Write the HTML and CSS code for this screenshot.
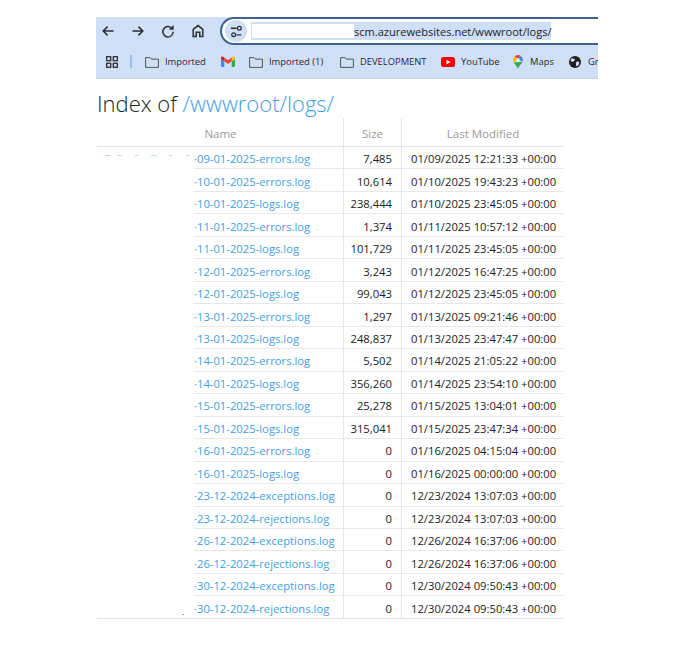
FILE: index.html
```html
<!DOCTYPE html>
<html lang="en">
<head>
<meta charset="utf-8">
<title>Index of /wwwroot/logs/</title>
<link rel="stylesheet" href="styles.css">
</head>
<body>
<div class="frame">
  <header class="chrome">
    <div class="nav-row">
      <svg class="nav-icon" viewBox="-3 -3 30 30"><path d="M19 12H6M11.500 6.500 6 12l5.500 5.500"/></svg>
      <svg class="nav-icon" viewBox="-3 -3 30 30"><path d="M5 12h13M12.500 6.500 18 12l-5.500 5.500"/></svg>
      <svg class="nav-icon" viewBox="-3 -3 30 30"><path d="M17.300 9.200A6.500 6.500 0 1 0 18.500 13"/><path class="solid" d="M19 4.500v6h-6z"/></svg>
      <svg class="nav-icon" viewBox="-3 -3 30 30"><path d="M6 19V10l6-4.800 6 4.800v9h-3.800v-5.500h-4.400V19z"/></svg>
      <div class="omnibox">
        <span class="tune"><svg viewBox="0 0 16 16"><path d="M2 4.500h6M13 11.500H8"/><circle cx="11" cy="4.500" r="2"/><circle cx="5" cy="11.500" r="2"/></svg></span>
        <span class="url"><span class="url-mask"></span><span class="url-text">scm.azurewebsites.net/wwwroot/logs/</span></span>
      </div>
    </div>
    <div class="bookmarks">
      <svg class="apps" viewBox="0 0 12 12"><rect x="0.700" y="0.700" width="4" height="4"/><rect x="7.300" y="0.700" width="4" height="4"/><rect x="0.700" y="7.300" width="4" height="4"/><rect x="7.300" y="7.300" width="4" height="4"/></svg>
      <span class="divider"></span>
      <span class="mark m-imported"><svg class="folder" viewBox="0 0 14 12"><path d="M.6 1.600h4.400l1.300 1.500h7.100v8.300H.6z"/></svg>Imported</span>
      <span class="mark m-gmail"><svg class="fav" viewBox="0 0 14 12"><path fill="#4285f4" d="M1 11h2.300V5.200L0 3v6.800C0 10.500.5 11 1 11z"/><path fill="#34a853" d="M10.700 11H13c.5 0 1-.5 1-1.200V3l-3.300 2.200z"/><path fill="#fbbc04" d="M10.700 1.500v3.700L14 3V2c0-1.200-1.300-1.800-2.200-1.100z"/><path fill="#ea4335" d="M3.300 5.200V1.500L7 4.300l3.700-2.800v3.700L7 8z"/><path fill="#c5221f" d="M0 2v1l3.300 2.200V1.500L2.200.9C1.300.2 0 .8 0 2z"/></svg></span>
      <span class="mark m-imported1"><svg class="folder" viewBox="0 0 14 12"><path d="M.6 1.600h4.400l1.300 1.500h7.100v8.300H.6z"/></svg>Imported (1)</span>
      <span class="mark m-dev"><svg class="folder" viewBox="0 0 14 12"><path d="M.6 1.600h4.400l1.300 1.500h7.100v8.300H.6z"/></svg>DEVELOPMENT</span>
      <span class="mark m-yt"><svg class="fav" viewBox="0 0 14 10"><rect width="14" height="10" rx="2.500" fill="#f00"/><path fill="#fff" d="M5.500 2.800 9.500 5l-4 2.200z"/></svg>YouTube</span>
      <span class="mark m-maps"><svg class="pin" viewBox="0 0 10 14"><path fill="#ea4335" d="M1.500 1.700A5 5 0 0 1 5 0c1.200 0 2.300.4 3 1.100L5 4z"/><path fill="#4285f4" d="M8 1.100A5 5 0 0 1 9.400 6.800L5 4z"/><path fill="#fbbc04" d="M.7 7.400A5 5 0 0 1 1.500 1.700L5 5z"/><path fill="#34a853" d="M.7 7.400 9.400 6.800C8.500 9.500 6 10.500 5 14 4 11 2 9.500.7 7.400z"/><circle cx="5" cy="5" r="1.700" fill="#fff"/></svg>Maps</span>
      <span class="mark m-gm"><svg class="fav" viewBox="0 0 14 14"><circle cx="7" cy="7" r="7" fill="#1f1f1f"/><path fill="#cfdff5" d="M3 2.500 7 3.500 6 6 3.500 7 1.700 5zM9 6l3.200 1.200-1.200 3.800-2.500 1L8 8.500z"/></svg>Gm</span>
    </div>
  </header>

  <main class="listing">
    <h1 class="title">Index of <a class="path" href="#">/wwwroot/logs/</a></h1>
    <div class="table">
      <div class="row head"><div class="c-name">Name</div><div class="c-size">Size</div><div class="c-date">Last Modified</div></div>
      <div class="row first"><div class="c-name"><i class="smudge"></i><a href="#">·09-01-2025-errors.log</a></div><div class="c-size">7,485</div><div class="c-date">01/09/2025 12:21:33 +00:00</div></div>
      <div class="row"><div class="c-name"><a href="#">·10-01-2025-errors.log</a></div><div class="c-size">10,614</div><div class="c-date">01/10/2025 19:43:23 +00:00</div></div>
      <div class="row"><div class="c-name"><a href="#">·10-01-2025-logs.log</a></div><div class="c-size">238,444</div><div class="c-date">01/10/2025 23:45:05 +00:00</div></div>
      <div class="row"><div class="c-name"><a href="#">·11-01-2025-errors.log</a></div><div class="c-size">1,374</div><div class="c-date">01/11/2025 10:57:12 +00:00</div></div>
      <div class="row"><div class="c-name"><a href="#">·11-01-2025-logs.log</a></div><div class="c-size">101,729</div><div class="c-date">01/11/2025 23:45:05 +00:00</div></div>
      <div class="row"><div class="c-name"><a href="#">·12-01-2025-errors.log</a></div><div class="c-size">3,243</div><div class="c-date">01/12/2025 16:47:25 +00:00</div></div>
      <div class="row"><div class="c-name"><a href="#">·12-01-2025-logs.log</a></div><div class="c-size">99,043</div><div class="c-date">01/12/2025 23:45:05 +00:00</div></div>
      <div class="row"><div class="c-name"><a href="#">·13-01-2025-errors.log</a></div><div class="c-size">1,297</div><div class="c-date">01/13/2025 09:21:46 +00:00</div></div>
      <div class="row"><div class="c-name"><a href="#">·13-01-2025-logs.log</a></div><div class="c-size">248,837</div><div class="c-date">01/13/2025 23:47:47 +00:00</div></div>
      <div class="row"><div class="c-name"><a href="#">·14-01-2025-errors.log</a></div><div class="c-size">5,502</div><div class="c-date">01/14/2025 21:05:22 +00:00</div></div>
      <div class="row"><div class="c-name"><a href="#">·14-01-2025-logs.log</a></div><div class="c-size">356,260</div><div class="c-date">01/14/2025 23:54:10 +00:00</div></div>
      <div class="row"><div class="c-name"><a href="#">·15-01-2025-errors.log</a></div><div class="c-size">25,278</div><div class="c-date">01/15/2025 13:04:01 +00:00</div></div>
      <div class="row"><div class="c-name"><a href="#">·15-01-2025-logs.log</a></div><div class="c-size">315,041</div><div class="c-date">01/15/2025 23:47:34 +00:00</div></div>
      <div class="row"><div class="c-name"><a href="#">·16-01-2025-errors.log</a></div><div class="c-size">0</div><div class="c-date">01/16/2025 04:15:04 +00:00</div></div>
      <div class="row"><div class="c-name"><a href="#">·16-01-2025-logs.log</a></div><div class="c-size">0</div><div class="c-date">01/16/2025 00:00:00 +00:00</div></div>
      <div class="row"><div class="c-name"><a href="#">·23-12-2024-exceptions.log</a></div><div class="c-size">0</div><div class="c-date">12/23/2024 13:07:03 +00:00</div></div>
      <div class="row"><div class="c-name"><a href="#">·23-12-2024-rejections.log</a></div><div class="c-size">0</div><div class="c-date">12/23/2024 13:07:03 +00:00</div></div>
      <div class="row"><div class="c-name"><a href="#">·26-12-2024-exceptions.log</a></div><div class="c-size">0</div><div class="c-date">12/26/2024 16:37:06 +00:00</div></div>
      <div class="row"><div class="c-name"><a href="#">·26-12-2024-rejections.log</a></div><div class="c-size">0</div><div class="c-date">12/26/2024 16:37:06 +00:00</div></div>
      <div class="row"><div class="c-name"><a href="#">·30-12-2024-exceptions.log</a></div><div class="c-size">0</div><div class="c-date">12/30/2024 09:50:43 +00:00</div></div>
      <div class="row last"><div class="c-name"><i class="speck"></i><a href="#">·30-12-2024-rejections.log</a></div><div class="c-size">0</div><div class="c-date">12/30/2024 09:50:43 +00:00</div></div>
    </div>
  </main>
</div>
</body>
</html>
```

FILE: styles.css
```css
* { box-sizing: border-box; }
html, body { margin: 0; background: #fff; }
body { font-family: "Open Sans", "Liberation Sans", sans-serif; color: #222; overflow: hidden; height: 651px; }
.frame { width: 502px; margin: 17px 0 0 96px; }

.chrome { background: #cfdff5; height: 62px; border-bottom: 1px solid #c3d3ea; overflow: hidden; }
.nav-row { display: flex; align-items: center; gap: 6px; height: 28px; }
.nav-icon { width: 24px; height: 24px; flex: none; fill: none; stroke: #2b2f36; stroke-width: 1.900; }
.nav-icon .solid { fill: #2b2f36; stroke: none; }
.omnibox { flex: 1; margin: 0 -40px 0 4px; height: 28px; display: flex; align-items: center; gap: 4px; padding-left: 3px; background: #fff; border: 2px solid #3f6190; border-right: 0; border-radius: 14px 0 0 14px; }
.tune { width: 22px; height: 22px; flex: none; border-radius: 50%; background: #cfdff5; display: flex; align-items: center; justify-content: center; }
.tune svg { width: 15px; height: 15px; fill: none; stroke: #2b2f36; stroke-width: 1.400; }
.url { display: flex; align-items: center; height: 18px; background: #cfdff5; width: 300px; padding: 0 0 0 1px; }
.url-mask { width: 102px; height: 14px; background: #fff; flex: none; }
.url-text { font-size: 11.050px; color: #20242a; white-space: nowrap; }

.bookmarks { display: flex; align-items: center; height: 33px; padding-left: 10px; font-size: 9.400px; color: #262a30; white-space: nowrap; }
.apps { width: 12px; height: 12px; fill: none; stroke: #2b2f36; stroke-width: 1.300; flex: none; }
.divider { width: 2px; height: 13px; margin-left: 12px; background: #9dbce6; flex: none; }
.mark { display: flex; align-items: center; gap: 6px; flex: none; }
.folder { width: 14px; height: 12px; fill: none; stroke: #50555c; stroke-width: 1; flex: none; }
.fav { width: 14px; height: 12px; flex: none; }
.pin { width: 10px; height: 14px; flex: none; }
.m-imported { margin-left: 13px; width: 76px; }
.m-gmail { width: 28px; }
.m-imported1 { width: 91px; }
.m-dev { width: 101px; }
.m-yt { width: 72px; }
.m-maps { width: 55px; gap: 7px; }
.m-gm { width: 30px; overflow: hidden; }

.listing { margin-top: 8px; }
.title { margin: 0; height: 31px; font-size: 22px; line-height: 32px; font-weight: 300; color: #222; padding-left: 1px; white-space: nowrap; }
.title a, .c-name a { color: #3f9fe3; text-decoration: none; }
.table { width: 467px; margin-left: 1px; font-size: 11.250px; }
.row { display: grid; grid-template-columns: 246px 58px 163px; grid-template-rows: minmax(0, 1fr); height: 22.480px; line-height: 18px; white-space: nowrap; position: relative; }
.row > div { border-bottom: 1px solid #e8e8e8; }
.row > .c-name { border-bottom: 0; padding-left: 97px; position: relative; }
.row > .c-size, .row > .c-date { border-left: 1.500px solid #e6e6e6; padding-top: 3.250px; }
.c-name a { display: block; height: 100%; padding-top: 3.250px; border-bottom: 1px solid #e8e8e8; }
.c-size { text-align: right; padding-right: 9px; }
.c-date { padding-left: 9px; }
.row.last { height: 23px; border-bottom: 1px solid #e3e3e3; }
.row.last > div, .row.last .c-name a { border-bottom: 0; }
.row.head { height: 29px; line-height: 32px; font-size: 11.500px; color: #9a9a9a; border-bottom: 1px solid #e3e3e3; }
.row.head > div { border-bottom: 0; text-align: center; padding: 0; }
.row.head > .c-name { padding-left: 1px; }
.smudge { position: absolute; left: 8px; top: 8px; width: 84px; height: 1px; background: linear-gradient(90deg, #b9d8f2 0 5px, transparent 5px 12px, #c8e0f5 12px 17px, transparent 17px 30px, #b9d8f2 30px 33px, transparent 33px 46px, #c8e0f5 46px 52px, transparent 52px 64px, #b9d8f2 64px 67px, transparent 67px 81px, #b9d8f2 81px 84px); }
.speck { position: absolute; left: 85px; bottom: 3px; width: 2px; height: 1px; background: #7fb9e8; }
```
